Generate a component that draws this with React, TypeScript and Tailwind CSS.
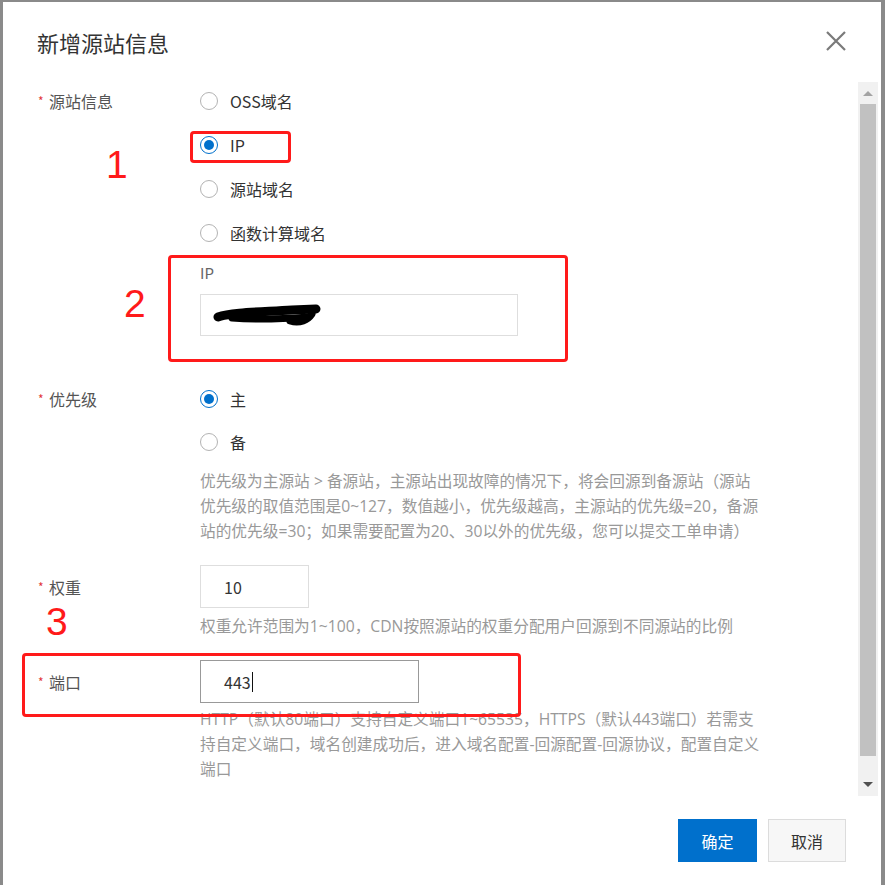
const font = "font-['Noto_Sans_CJK_SC','Noto_Sans',sans-serif]";

const Radio = ({ label, checked }: { label: string; checked?: boolean }) => (
  <div className="flex items-center h-[22px] gap-[12px]">
    {checked ? (
      <span className="w-[18px] h-[18px] rounded-full border border-[#0070cc] flex items-center justify-center">
        <span className="w-[10px] h-[10px] rounded-full bg-[#0070cc]" />
      </span>
    ) : (
      <span className="w-[18px] h-[18px] rounded-full border border-[#b3b3b3] bg-white" />
    )}
    <span className="text-[16px] text-[#333] leading-[22px]">{label}</span>
  </div>
);

const Label = ({ text, h = "h-[22px]" }: { text: string; h?: string }) => (
  <div className={`w-[162px] shrink-0 flex items-center ${h}`}>
    <span className="w-[11px] text-[12px] text-[#e2383a] leading-none">*</span>
    <span className="text-[16px] text-[#555] leading-[22px]">{text}</span>
  </div>
);

const Help = ({ lines, cls }: { lines: string[]; cls: string }) => (
  <div className={`font-['Open_Sans','Noto_Sans_CJK_SC',sans-serif] text-[15.7px] text-[#999] leading-[25px] ${cls}`}>
    {lines.map((l) => (
      <div key={l} className="whitespace-nowrap">{l}</div>
    ))}
  </div>
);

const Num = ({ n, cls }: { n: string; cls: string }) => (
  <span className={`absolute font-['Liberation_Sans',sans-serif] text-[39px] leading-[32px] text-[#ff1a1a] ${cls}`}>
    {n}
  </span>
);

export default function App() {
  return (
    <div className={`relative w-[885px] h-[885px] overflow-hidden bg-[#8a8a8a] ${font}`}>
      <div className="ml-[3px] mt-[2px] w-[878px] h-[883px] bg-white flex flex-col">
        {/* header */}
        <div className="h-[80px] shrink-0 flex items-center justify-between pl-[34px] pr-[35px]">
          <span className="text-[22px] text-[#333]">新增源站信息</span>
          <svg width="20" height="20" viewBox="0 0 20 20" className="mt-[-2px]">
            <path d="M1 1 L19 19 M19 1 L1 19" stroke="#7a7a7a" strokeWidth="2.2" />
          </svg>
        </div>

        {/* body */}
        <div className="h-[714px] shrink-0 flex">
          <div className="flex-1 overflow-hidden pl-[35px] pt-[8px]">
            <div className="flex">
              <Label text="源站信息" />
              <div className="flex flex-col">
                <div className="flex flex-col gap-[22px]">
                  <Radio label="OSS域名" />
                  <Radio label="IP" checked />
                  <Radio label="源站域名" />
                  <Radio label="函数计算域名" />
                </div>
                <div className="mt-[19px] h-[20px] text-[15px] text-[#666] leading-[20px]">IP</div>
                <div className="mt-[11px] w-[318px] h-[42px] border border-[#dedede] flex items-center">
                  <svg width="110" height="30" viewBox="0 0 110 30" className="ml-[11px]">
                    <path d="M6 17 C20 12 50 12 80 10 L104 9" stroke="#000" strokeWidth="9" strokeLinecap="round" fill="none" />
                    <path d="M20 18 C45 20 70 19 96 17" stroke="#000" strokeWidth="7" strokeLinecap="round" fill="none" />
                    <path d="M78 21 C88 24 96 20 100 14" stroke="#000" strokeWidth="7" strokeLinecap="round" fill="none" />
                  </svg>
                </div>
              </div>
            </div>

            <div className="flex mt-[52px]">
              <Label text="优先级" />
              <div className="flex flex-col">
                <div className="flex flex-col gap-[21px]">
                  <Radio label="主" checked />
                  <Radio label="备" />
                </div>
                <Help
                  cls="mt-[16px]"
                  lines={[
                    "优先级为主源站 > 备源站，主源站出现故障的情况下，将会回源到备源站（源站",
                    "优先级的取值范围是0~127，数值越小，优先级越高，主源站的优先级=20，备源",
                    "站的优先级=30；如果需要配置为20、30以外的优先级，您可以提交工单申请）",
                  ]}
                />
              </div>
            </div>

            <div className="flex mt-[21px]">
              <Label text="权重" h="h-[43px]" />
              <div className="flex flex-col">
                <div className="w-[109px] h-[43px] border border-[#dedede] flex items-center pl-[23px] text-[16px] text-[#333]">
                  10
                </div>
                <Help cls="mt-[6px]" lines={["权重允许范围为1~100，CDN按照源站的权重分配用户回源到不同源站的比例"]} />
              </div>
            </div>

            <div className="flex mt-[21px]">
              <Label text="端口" h="h-[43px]" />
              <div className="flex flex-col">
                <div className="w-[219px] h-[43px] border border-[#999] flex items-center pl-[23px] text-[16px] text-[#333]">
                  443<span className="w-px h-[20px] bg-[#111] ml-[1px]" />
                </div>
                <Help
                  cls="mt-[4px]"
                  lines={[
                    "HTTP（默认80端口）支持自定义端口1~65535，HTTPS（默认443端口）若需支",
                    "持自定义端口，域名创建成功后，进入域名配置-回源配置-回源协议，配置自定义",
                    "端口",
                  ]}
                />
              </div>
            </div>
          </div>

          {/* scrollbar */}
          <div className="w-[20px] mr-[3px] bg-[#f1f1f1] flex flex-col items-center">
            <div className="h-[22px] flex items-center justify-center">
              <span className="w-0 h-0 border-x-[5px] border-x-transparent border-b-[5px] border-b-[#a3a3a3]" />
            </div>
            <div className="w-[16px] h-[652px] bg-[#c1c1c1]" />
            <div className="flex-1" />
            <div className="h-[24px] flex items-center justify-center">
              <span className="w-0 h-0 border-x-[5px] border-x-transparent border-t-[5px] border-t-[#505050]" />
            </div>
          </div>
        </div>

        {/* footer */}
        <div className="flex justify-end gap-[11px] pr-[35px] pt-[23px]">
          <button className="w-[79px] h-[43px] bg-[#0070cc] text-white text-[16px]">确定</button>
          <button className="w-[78px] h-[43px] bg-[#f7f7f7] border border-[#dcdcdc] text-[#333] text-[16px]">取消</button>
        </div>
      </div>

      {/* annotations */}
      <div className="absolute left-[190px] top-[131px] w-[101px] h-[32px] border-[3px] border-[#ff1a1a] rounded-[4px]" />
      <div className="absolute left-[168px] top-[255px] w-[400px] h-[107px] border-[3px] border-[#ff1a1a] rounded-[4px]" />
      <div className="absolute left-[22px] top-[653px] w-[499px] h-[64px] border-[3px] border-[#ff1a1a] rounded-[4px]" />
      <Num n="1" cls="left-[106px] top-[149px]" />
      <Num n="2" cls="left-[124px] top-[288px]" />
      <Num n="3" cls="left-[46px] top-[606px]" />
    </div>
  );
}
